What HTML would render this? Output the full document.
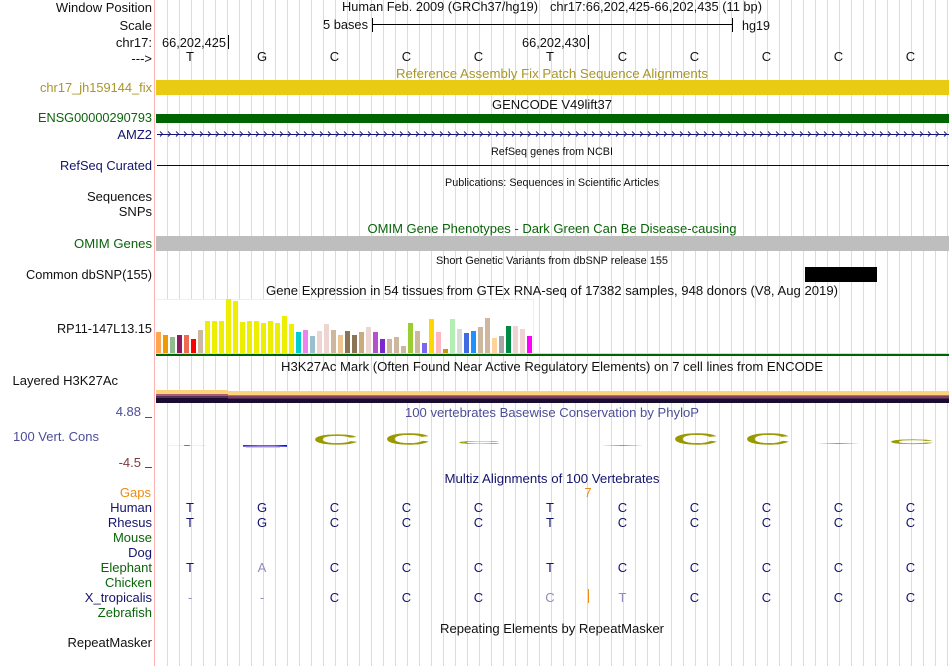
<!DOCTYPE html>
<html><head><meta charset="utf-8"><style>
html,body{margin:0;padding:0;background:#fff;width:950px;height:666px;overflow:hidden}
#grid{position:absolute;left:156px;top:0;width:794px;height:666px;background:repeating-linear-gradient(90deg,transparent 0,transparent 11px,#d9d9f6 11px,#d9d9f6 12px)}
svg{display:block;position:absolute;left:0;top:0}
text{font-family:"Liberation Sans",sans-serif;font-size:13px;fill:#111}
text.s{font-size:10.8px}
.l text{text-anchor:end}
text.m{text-anchor:middle}
text.n,.n text{fill:#14146e}
text.g{fill:#0a640a}
text.p{fill:#4d4d99}
.b text{text-anchor:middle}
.b text.f{fill:#8d8dbb}
text.c{fill:#999900;stroke:#999900;stroke-width:.5px;font-size:20px;text-anchor:middle}
</style></head><body>
<div id="grid"></div>
<svg width="950" height="666" viewBox="0 0 950 666" xmlns="http://www.w3.org/2000/svg">
<defs>
<pattern id="chev" x="158" y="130" width="8" height="8" patternUnits="userSpaceOnUse"><path d="M2 1.500 L4.500 4 L2 6.500" fill="none" stroke="#14147a" stroke-width=".9"/></pattern>
<linearGradient id="fade1" x1="0" x2="1" y1="0" y2="0"><stop offset="0" stop-color="#999900" stop-opacity=".1"/><stop offset=".5" stop-color="#999900" stop-opacity=".9"/><stop offset="1" stop-color="#999900" stop-opacity=".1"/></linearGradient>
<linearGradient id="fade2" x1="0" x2="1" y1="0" y2="0"><stop offset="0" stop-color="#00c000" stop-opacity=".1"/><stop offset=".42" stop-color="#00c000" stop-opacity=".1"/><stop offset=".43" stop-color="#00d000"/><stop offset=".57" stop-color="#00d000"/><stop offset=".58" stop-color="#00c000" stop-opacity=".1"/><stop offset="1" stop-color="#00c000" stop-opacity=".1"/></linearGradient>
<linearGradient id="blue" x1="0" x2="1" y1="0" y2="0"><stop offset="0" stop-color="#2a2af0"/><stop offset=".35" stop-color="#6060f8"/><stop offset=".7" stop-color="#6060f8"/><stop offset="1" stop-color="#0000f0"/></linearGradient>
</defs>
<rect x="154" y="0" width="1" height="666" fill="#ffb0b0"/>

<!-- left labels -->
<g class="l">
<text x="152" y="12">Window Position</text>
<text x="152" y="30">Scale</text>
<text x="152" y="47">chr17:</text>
<text x="152" y="63">---&gt;</text>
<text x="152" y="92" style="fill:#a89628" textLength="112" lengthAdjust="spacingAndGlyphs">chr17_jh159144_fix</text>
<text x="152" y="122" class="g" textLength="114" lengthAdjust="spacingAndGlyphs">ENSG00000290793</text>
<text x="152" y="139" class="n">AMZ2</text>
<text x="152" y="170" class="n" textLength="92" lengthAdjust="spacingAndGlyphs">RefSeq Curated</text>
<text x="152" y="201">Sequences</text>
<text x="152" y="216">SNPs</text>
<text x="152" y="248" class="g" textLength="78" lengthAdjust="spacingAndGlyphs">OMIM Genes</text>
<text x="152" y="279" textLength="126" lengthAdjust="spacingAndGlyphs">Common dbSNP(155)</text>
<text x="152" y="333" textLength="95" lengthAdjust="spacingAndGlyphs">RP11-147L13.15</text>
<text x="118" y="385">Layered H3K27Ac</text>
<text x="141" y="416" class="p">4.88</text>
<text x="141" y="467" style="fill:#7f3a3a">-4.5</text>
<text x="151" y="497" style="fill:#ee8a10">Gaps</text>
<text x="152" y="512" class="n">Human</text>
<text x="152" y="527" class="n">Rhesus</text>
<text x="152" y="542" class="g">Mouse</text>
<text x="152" y="557" class="n">Dog</text>
<text x="152" y="572" class="g">Elephant</text>
<text x="152" y="587" class="g">Chicken</text>
<text x="152" y="602" class="n">X_tropicalis</text>
<text x="152" y="617" class="g">Zebrafish</text>
<text x="152" y="647">RepeatMasker</text>
</g>
<rect x="145" y="417" width="7" height="1" fill="#4d4d99"/>
<rect x="145" y="467" width="7" height="1" fill="#7f3a3a"/>
<text x="13" y="441" class="p">100 Vert. Cons</text>

<!-- header -->
<text x="342" y="11" textLength="196" lengthAdjust="spacingAndGlyphs">Human Feb. 2009 (GRCh37/hg19)</text>
<text x="550" y="11" textLength="212" lengthAdjust="spacingAndGlyphs">chr17:66,202,425-66,202,435 (11 bp)</text>
<text x="323" y="29" textLength="45" lengthAdjust="spacingAndGlyphs">5 bases</text>
<rect x="372" y="18" width="1" height="14" fill="#000"/>
<rect x="732" y="18" width="1" height="14" fill="#000"/>
<rect x="372" y="24" width="361" height="1" fill="#000"/>
<text x="742" y="30" textLength="28" lengthAdjust="spacingAndGlyphs">hg19</text>
<text x="162" y="47" textLength="64" lengthAdjust="spacingAndGlyphs">66,202,425</text>
<rect x="228" y="35" width="1" height="14" fill="#000"/>
<text x="522" y="47" textLength="64" lengthAdjust="spacingAndGlyphs">66,202,430</text>
<rect x="588" y="35" width="1" height="14" fill="#000"/>

<g class="b">
<text x="190" y="61">T</text><text x="262" y="61">G</text><text x="334.500" y="61">C</text><text x="406.500" y="61">C</text><text x="478.500" y="61">C</text><text x="550" y="61">T</text><text x="622.500" y="61">C</text><text x="694.500" y="61">C</text><text x="766.500" y="61">C</text><text x="838.500" y="61">C</text><text x="910.500" y="61">C</text>
</g>

<!-- tracks -->
<text x="552" y="78" class="m" style="fill:#a89628" textLength="312" lengthAdjust="spacingAndGlyphs">Reference Assembly Fix Patch Sequence Alignments</text>
<rect x="156" y="80" width="793" height="15" fill="#e9cb14"/>
<text x="552" y="109" class="m" textLength="120" lengthAdjust="spacingAndGlyphs">GENCODE V49lift37</text>
<rect x="156" y="114" width="793" height="9" fill="#006400"/>
<rect x="157" y="134" width="792" height="1" fill="#14147a"/>
<rect x="157" y="130" width="792" height="8" fill="url(#chev)"/>
<text x="552" y="155" class="m s" textLength="122" lengthAdjust="spacingAndGlyphs">RefSeq genes from NCBI</text>
<rect x="157" y="165" width="792" height="1" fill="#00006a"/>
<text x="552" y="186" class="m s" textLength="214" lengthAdjust="spacingAndGlyphs">Publications: Sequences in Scientific Articles</text>
<text x="552" y="233" class="m" style="fill:#0a640a" textLength="369" lengthAdjust="spacingAndGlyphs">OMIM Gene Phenotypes - Dark Green Can Be Disease-causing</text>
<rect x="156" y="236" width="793" height="15" fill="#bebebe"/>
<text x="552" y="264" class="m s" textLength="232" lengthAdjust="spacingAndGlyphs">Short Genetic Variants from dbSNP release 155</text>
<rect x="805" y="267" width="72" height="15" fill="#000"/>
<text x="552" y="295" class="m" textLength="572" lengthAdjust="spacingAndGlyphs">Gene Expression in 54 tissues from GTEx RNA-seq of 17382 samples, 948 donors (V8, Aug 2019)</text>

<!-- GTEx -->
<rect x="156" y="299" width="377" height="54" fill="#fff"/>
<path d="M156 299.500H533.500V353" fill="none" stroke="#eeeeee"/>
<g>
<rect x="156" y="332" width="5" height="21" fill="#ffa54f"/>
<rect x="163" y="335" width="5" height="18" fill="#ee9a00"/>
<rect x="170" y="337" width="5" height="16" fill="#8fbc8f"/>
<rect x="177" y="335" width="5" height="18" fill="#8b1c62"/>
<rect x="184" y="335" width="5" height="18" fill="#ee6a50"/>
<rect x="191" y="339" width="5" height="14" fill="#ff0000"/>
<rect x="198" y="330" width="5" height="23" fill="#cdb79e"/>
<rect x="205" y="321" width="5" height="32" fill="#eeee00"/>
<rect x="212" y="321" width="5" height="32" fill="#eeee00"/>
<rect x="219" y="321" width="5" height="32" fill="#eeee00"/>
<rect x="226" y="299" width="5" height="54" fill="#eeee00"/>
<rect x="233" y="301" width="5" height="52" fill="#eeee00"/>
<rect x="240" y="322" width="5" height="31" fill="#eeee00"/>
<rect x="247" y="321" width="5" height="32" fill="#eeee00"/>
<rect x="254" y="321" width="5" height="32" fill="#eeee00"/>
<rect x="261" y="323" width="5" height="30" fill="#eeee00"/>
<rect x="268" y="321" width="5" height="32" fill="#eeee00"/>
<rect x="275" y="323" width="5" height="30" fill="#eeee00"/>
<rect x="282" y="316" width="5" height="37" fill="#eeee00"/>
<rect x="289" y="324" width="5" height="29" fill="#eeee00"/>
<rect x="296" y="332" width="5" height="21" fill="#00cdcd"/>
<rect x="303" y="330" width="5" height="23" fill="#ee82ee"/>
<rect x="310" y="336" width="5" height="17" fill="#9ac0cd"/>
<rect x="317" y="331" width="5" height="22" fill="#eed5d2"/>
<rect x="324" y="324" width="5" height="29" fill="#eed5d2"/>
<rect x="331" y="330" width="5" height="23" fill="#cdb79e"/>
<rect x="338" y="335" width="5" height="18" fill="#eec591"/>
<rect x="345" y="331" width="5" height="22" fill="#8b7355"/>
<rect x="352" y="335" width="5" height="18" fill="#8b7355"/>
<rect x="359" y="332" width="5" height="21" fill="#cdaa7d"/>
<rect x="366" y="327" width="5" height="26" fill="#eed5d2"/>
<rect x="373" y="332" width="5" height="21" fill="#b452cd"/>
<rect x="380" y="339" width="5" height="14" fill="#7d26cd"/>
<rect x="387" y="339" width="5" height="14" fill="#cdb79e"/>
<rect x="394" y="337" width="5" height="16" fill="#cdb79e"/>
<rect x="401" y="346" width="5" height="7" fill="#cdb79e"/>
<rect x="408" y="323" width="5" height="30" fill="#9acd32"/>
<rect x="415" y="331" width="5" height="22" fill="#cdb79e"/>
<rect x="422" y="343" width="5" height="10" fill="#7a67ee"/>
<rect x="429" y="319" width="5" height="34" fill="#ffd700"/>
<rect x="436" y="332" width="5" height="21" fill="#ffb6c1"/>
<rect x="443" y="349" width="5" height="4" fill="#cd950c"/>
<rect x="450" y="319" width="5" height="34" fill="#b4eeb4"/>
<rect x="457" y="329" width="5" height="24" fill="#d9d9d9"/>
<rect x="464" y="333" width="5" height="20" fill="#4169e1"/>
<rect x="471" y="331" width="5" height="22" fill="#1e90ff"/>
<rect x="478" y="327" width="5" height="26" fill="#cdb79e"/>
<rect x="485" y="318" width="5" height="35" fill="#cdb79e"/>
<rect x="492" y="338" width="5" height="15" fill="#ffd39b"/>
<rect x="499" y="336" width="5" height="17" fill="#a6a6a6"/>
<rect x="506" y="326" width="5" height="27" fill="#008b45"/>
<rect x="513" y="326" width="5" height="27" fill="#eed5d2"/>
<rect x="520" y="329" width="5" height="24" fill="#eed5d2"/>
<rect x="527" y="336" width="5" height="17" fill="#ff00ff"/>
</g>
<rect x="156" y="353" width="793" height="1" fill="#d8d8d8"/>
<rect x="156" y="354" width="793" height="2" fill="#006400"/>
<text x="552" y="371" class="m" textLength="542" lengthAdjust="spacingAndGlyphs">H3K27Ac Mark (Often Found Near Active Regulatory Elements) on 7 cell lines from ENCODE</text>

<!-- H3K27Ac -->
<rect x="156" y="390" width="72" height="4" fill="#fdd27c"/>
<rect x="156" y="394" width="72" height="2" fill="#a8606e"/>
<rect x="156" y="396" width="72" height="2" fill="#5a3058"/>
<rect x="156" y="398" width="72" height="5" fill="#1a0b30"/>
<rect x="228" y="391" width="721" height="4" fill="#fdd27c"/>
<rect x="228" y="395" width="721" height="1" fill="#d0606a"/>
<rect x="228" y="396" width="721" height="2" fill="#863f60"/>
<rect x="228" y="398" width="721" height="1" fill="#48284f"/>
<rect x="228" y="399" width="721" height="4" fill="#1a0b30"/>

<text x="552" y="417" class="m p" textLength="294" lengthAdjust="spacingAndGlyphs">100 vertebrates Basewise Conservation by PhyloP</text>

<!-- logos -->
<rect x="168" y="445" width="38" height="1" fill="url(#fade2)"/>
<rect x="243" y="445" width="44" height="1.700" fill="url(#blue)"/>
<rect x="246" y="446.700" width="34" height="1" fill="#f4a8a8"/>
<text class="c" transform="translate(335.500 444.700) scale(3.150 .740)">C</text>
<text class="c" transform="translate(407.500 444.300) scale(3.150 .780)">C</text>
<text class="c" transform="translate(479 443.900) scale(3.050 .230)" style="fill-opacity:.85">C</text>
<rect x="603" y="445" width="39" height="1" fill="url(#fade1)"/>
<text class="c" transform="translate(695.500 444.700) scale(3.150 .800)">C</text>
<text class="c" transform="translate(767.500 444.700) scale(3.150 .800)">C</text>
<rect x="819" y="443" width="39" height="1" fill="url(#fade1)"/>
<text class="c" transform="translate(911.500 443.900) scale(3.150 .340)">C</text>

<text x="552" y="483" class="m n" textLength="215" lengthAdjust="spacingAndGlyphs">Multiz Alignments of 100 Vertebrates</text>
<text x="588" y="497" class="m" style="fill:#ee8a10">7</text>

<!-- alignment -->
<g class="b n">
<text x="190" y="512">T</text><text x="262" y="512">G</text><text x="334.500" y="512">C</text><text x="406.500" y="512">C</text><text x="478.500" y="512">C</text><text x="550" y="512">T</text><text x="622.500" y="512">C</text><text x="694.500" y="512">C</text><text x="766.500" y="512">C</text><text x="838.500" y="512">C</text><text x="910.500" y="512">C</text>
<text x="190" y="527">T</text><text x="262" y="527">G</text><text x="334.500" y="527">C</text><text x="406.500" y="527">C</text><text x="478.500" y="527">C</text><text x="550" y="527">T</text><text x="622.500" y="527">C</text><text x="694.500" y="527">C</text><text x="766.500" y="527">C</text><text x="838.500" y="527">C</text><text x="910.500" y="527">C</text>
<text x="190" y="572">T</text><text x="262" y="572" class="f">A</text><text x="334.500" y="572">C</text><text x="406.500" y="572">C</text><text x="478.500" y="572">C</text><text x="550" y="572">T</text><text x="622.500" y="572">C</text><text x="694.500" y="572">C</text><text x="766.500" y="572">C</text><text x="838.500" y="572">C</text><text x="910.500" y="572">C</text>
<text x="190" y="602" class="f">-</text><text x="262" y="602" class="f">-</text><text x="334.500" y="602">C</text><text x="406.500" y="602">C</text><text x="478.500" y="602">C</text><text x="550" y="602" class="f">C</text><text x="622.500" y="602" class="f">T</text><text x="694.500" y="602">C</text><text x="766.500" y="602">C</text><text x="838.500" y="602">C</text><text x="910.500" y="602">C</text>
</g>
<rect x="588" y="589" width="1" height="14" fill="#ee8a10"/>
<text x="552" y="633" class="m" textLength="224" lengthAdjust="spacingAndGlyphs">Repeating Elements by RepeatMasker</text>
</svg>
</body></html>
